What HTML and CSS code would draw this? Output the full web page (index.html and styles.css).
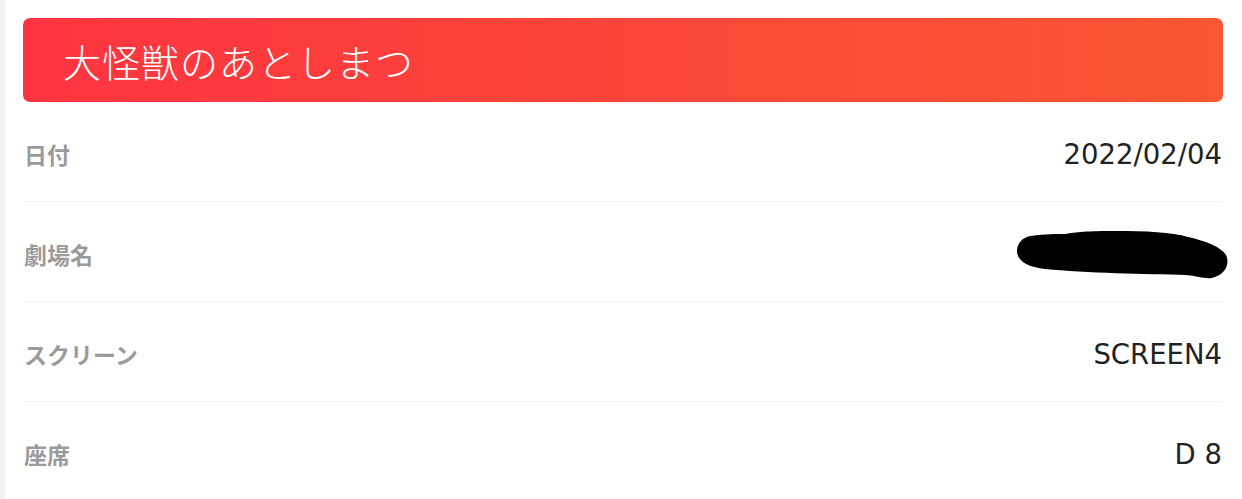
FILE: index.html
```html
<!DOCTYPE html>
<html lang="ja">
<head>
  <meta charset="UTF-8" />
  <meta name="viewport" content="width=device-width, initial-scale=1.0"/>
  <title>大怪獣のあとしまつ</title>
  <link rel="stylesheet" href="styles.css">
</head>
<body>

  <div class="ticket">
    <h1 class="ticket-title">大怪獣のあとしまつ</h1>

    <dl class="ticket-info">
      <div class="info-row">
        <dt>日付</dt>
        <dd>2022/02/04</dd>
      </div>
      <div class="info-row">
        <dt>劇場名</dt>
        <dd class="redacted">
          <svg width="214" height="52" viewBox="0 0 214 52">
            <path d="M15 7 C30 5 40 5 49 5 C60 3 70 2 100 2 C130 2 155 3 172 8 C190 12 205 18 210 26 C214 34 210 46 196 49 C188 50 182 47 170 46 C130 45 70 44 29 40 C12 38 1 32 1 22 C1 14 7 8 15 7 Z" fill="#000"/>
          </svg>
        </dd>
      </div>
      <div class="info-row">
        <dt>スクリーン</dt>
        <dd>SCREEN4</dd>
      </div>
      <div class="info-row">
        <dt>座席</dt>
        <dd>D 8</dd>
      </div>
    </dl>
  </div>

</body>
</html>
```

FILE: styles.css
```css
body {
  margin: 0;
  padding: 0;
  background: #fff;
  font-family: "DejaVu Sans", "Noto Sans CJK JP", sans-serif;
}

.ticket {
  border-left: 5px solid #f3f3f3;
  padding: 18px 19px 0 18px;
  min-height: 481px;
}

.ticket-title {
  margin: 0;
  height: 84px;
  display: flex;
  align-items: center;
  padding: 0 40px;
  border-radius: 7px;
  background: linear-gradient(90deg, #fd3440 0%, #fb5733 100%);
  color: #fff;
  font-family: "Noto Sans CJK JP", sans-serif;
  font-weight: 300;
  font-size: 38px;
  letter-spacing: 1px;
}

.ticket-info {
  margin: 0;
  padding: 0 1px;
}

.info-row {
  height: 100px;
  display: flex;
  align-items: center;
  justify-content: space-between;
  padding-top: 4px;
  box-sizing: border-box;
  border-bottom: 1px solid #f1f1f1;
}

.info-row:last-child {
  border-bottom: none;
}

.info-row dt {
  font-family: "Noto Sans CJK JP", sans-serif;
  font-weight: 700;
  font-size: 23px;
  color: #9b9b9b;
}

.info-row dd {
  margin: 0;
  font-size: 27.5px;
  color: #222;
}

.redacted {
  display: flex;
  margin-right: -8px !important;
  margin-top: 2px !important;
}
```
